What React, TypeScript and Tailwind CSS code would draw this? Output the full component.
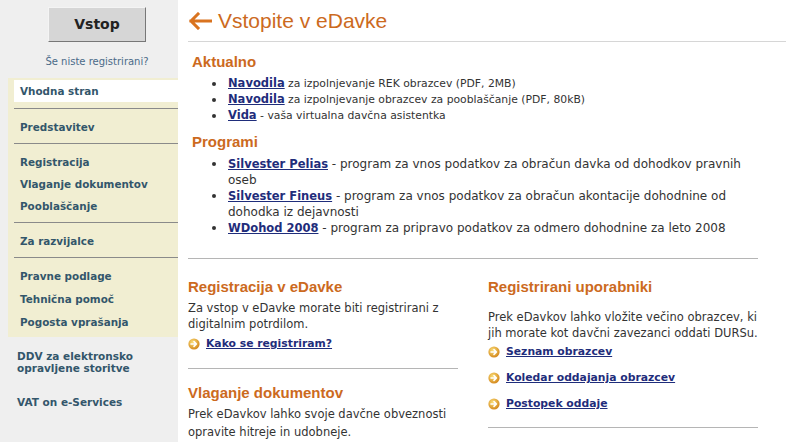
import React from 'react';

const orange = 'text-[#cc6a1e]';
const head = `font-['Liberation_Sans',Arial,sans-serif] font-bold text-[15px] leading-[18px] ${orange}`;

const GoIcon = () => (
  <svg width="12" height="12" viewBox="0 0 12 12" className="shrink-0">
    <defs>
      <radialGradient id="go" cx="40%" cy="35%" r="65%">
        <stop offset="0%" stopColor="#fbe07a" />
        <stop offset="100%" stopColor="#d4881c" />
      </radialGradient>
    </defs>
    <circle cx="6" cy="6" r="5.6" fill="url(#go)" />
    <path d="M3 6h5M6 3.6 8.4 6 6 8.4" stroke="#fff" strokeWidth="1.6" fill="none" strokeLinecap="round" strokeLinejoin="round" />
  </svg>
);

const GoLink = ({ children }: { children: React.ReactNode }) => (
  <div className="flex items-center gap-[6px] h-[18px]">
    <GoIcon />
    <a className="font-bold underline text-[#1f2d7b] text-[10.8px] leading-[18px]">{children}</a>
  </div>
);

const L = ({ children }: { children: React.ReactNode }) => (
  <a className="font-bold underline text-[#1f2d7b] text-[11.5px] leading-none">{children}</a>
);

const Bullet = ({ children }: { children: React.ReactNode }) => (
  <li className="flex pl-[20px] leading-[16px]">
    <span className="w-[16px] shrink-0 pt-[6px]">
      <span className="block w-[4px] h-[4px] rounded-full bg-[#333]" />
    </span>
    <span className="whitespace-nowrap">{children}</span>
  </li>
);

const menuGroups = [
  ['Predstavitev'],
  ['Registracija', 'Vlaganje dokumentov', 'Pooblaščanje'],
  ['Za razvijalce'],
];

export default function App() {
  return (
    <div className="flex w-[786px] h-[442px] overflow-hidden bg-white font-['DejaVu_Sans',Verdana,sans-serif] text-[11px] text-[#333]">
      <aside className="w-[178px] shrink-0 bg-[#efefef]">
        <div className="pt-[7px] pl-[48px]">
          <button className="w-[98px] h-[35px] bg-[#d6d6d6] border border-t-[#f4f4f4] border-l-[#f4f4f4] border-r-[#777] border-b-[#777] font-bold text-[14px] text-[#222]">
            Vstop
          </button>
        </div>
        <div className="mt-[14px] text-center pl-[16px] text-[10px] leading-[12px] text-[#4a6a88]">
          Še niste registrirani?
        </div>
        <div className="mt-[10px] ml-[8px] bg-[#f1eed2] pt-[2px] pb-[2px] font-bold text-[10.4px] text-[#33566b]">
          <div className="ml-[6px] bg-white h-[22px] leading-[22px] pl-[6px]">Vhodna stran</div>
          <div className="ml-[6px] h-[6px]" />
          {menuGroups.map((g, i) => (
            <div key={i} className="ml-[6px] border-t border-[#8a8a8a] pt-[7px] pb-[5px]">
              {g.map((t) => (
                <div key={t} className="pl-[6px] h-[22px] leading-[22px]">{t}</div>
              ))}
            </div>
          ))}
          <div className="ml-[6px] border-t border-[#8a8a8a] pt-[7px] pb-[1px]">
            {['Pravne podlage', 'Tehnična pomoč', 'Pogosta vprašanja'].map((t) => (
              <div key={t} className="pl-[6px] h-[23px] leading-[23px]">{t}</div>
            ))}
          </div>
        </div>
        <div className="pl-[17px] font-bold text-[10.5px] text-[#33566b]">
          <div className="mt-[13px] leading-[12px]">DDV za elektronsko<br />opravljene storitve</div>
          <div className="mt-[22px] leading-[12px]">VAT on e-Services</div>
        </div>
      </aside>

      <main className="flex-1 pl-[10px]">
        <header className="h-[42px] border-b border-[#d6d6d6] flex items-center gap-[6px]">
          <svg width="24" height="18" viewBox="0 0 24 18" className="shrink-0">
            <path d="M23 9H3M10 2 3 9l7 7" stroke="#d9731f" strokeWidth="3" fill="none" strokeLinecap="square" />
          </svg>
          <h1 className={`font-['Liberation_Sans',Arial,sans-serif] text-[21px] leading-[24px] ${orange}`}>Vstopite v eDavke</h1>
        </header>

        <div className="w-[570px]">
          <section className="pl-[4px]">
            <h2 className={`mt-[11px] ${head}`}>Aktualno</h2>
            <ul className="mt-[5px] text-[10.8px]">
              <Bullet><L>Navodila</L> za izpolnjevanje REK obrazcev (PDF, 2MB)</Bullet>
              <Bullet><L>Navodila</L> za izpolnjevanje obrazcev za pooblaščanje (PDF, 80kB)</Bullet>
              <Bullet><L>Vida</L> - vaša virtualna davčna asistentka</Bullet>
            </ul>
            <h2 className={`mt-[9px] ${head}`}>Programi</h2>
            <ul className="mt-[5px] text-[12px]">
              <Bullet><L>Silvester Pelias</L> - program za vnos podatkov za obračun davka od dohodkov pravnih<br />oseb</Bullet>
              <Bullet><L>Silvester Fineus</L> - program za vnos podatkov za obračun akontacije dohodnine od<br />dohodka iz dejavnosti</Bullet>
              <Bullet><L>WDohod 2008</L> - program za pripravo podatkov za odmero dohodnine za leto 2008</Bullet>
            </ul>
          </section>

          <div className="mt-[22px] border-t border-[#b5b5b5] grid grid-cols-2 gap-[30px] text-[11.5px]">
            <div>
              <h2 className={`mt-[19px] ${head}`}>Registracija v eDavke</h2>
              <p className="mt-[4px] leading-[16px] whitespace-nowrap">Za vstop v eDavke morate biti registrirani z<br />digitalnim potrdilom.</p>
              <div className="mt-[3px]"><GoLink>Kako se registriram?</GoLink></div>
              <div className="mt-[15px] border-t border-[#b5b5b5]">
                <h2 className={`mt-[15px] ${head}`}>Vlaganje dokumentov</h2>
                <p className="mt-[3px] leading-[18px] whitespace-nowrap">Prek eDavkov lahko svoje davčne obveznosti<br />opravite hitreje in udobneje.</p>
              </div>
            </div>
            <div>
              <h2 className={`mt-[19px] ${head}`}>Registrirani uporabniki</h2>
              <p className="mt-[13px] leading-[16px] whitespace-nowrap">Prek eDavkov lahko vložite večino obrazcev, ki<br />jih morate kot davčni zavezanci oddati DURSu.</p>
              <div className="mt-[2px] flex flex-col gap-[8px]">
                <GoLink>Seznam obrazcev</GoLink>
                <GoLink>Koledar oddajanja obrazcev</GoLink>
                <GoLink>Postopek oddaje</GoLink>
              </div>
              <div className="mt-[14px] border-t border-[#b5b5b5]" />
            </div>
          </div>
        </div>
      </main>
    </div>
  );
}
